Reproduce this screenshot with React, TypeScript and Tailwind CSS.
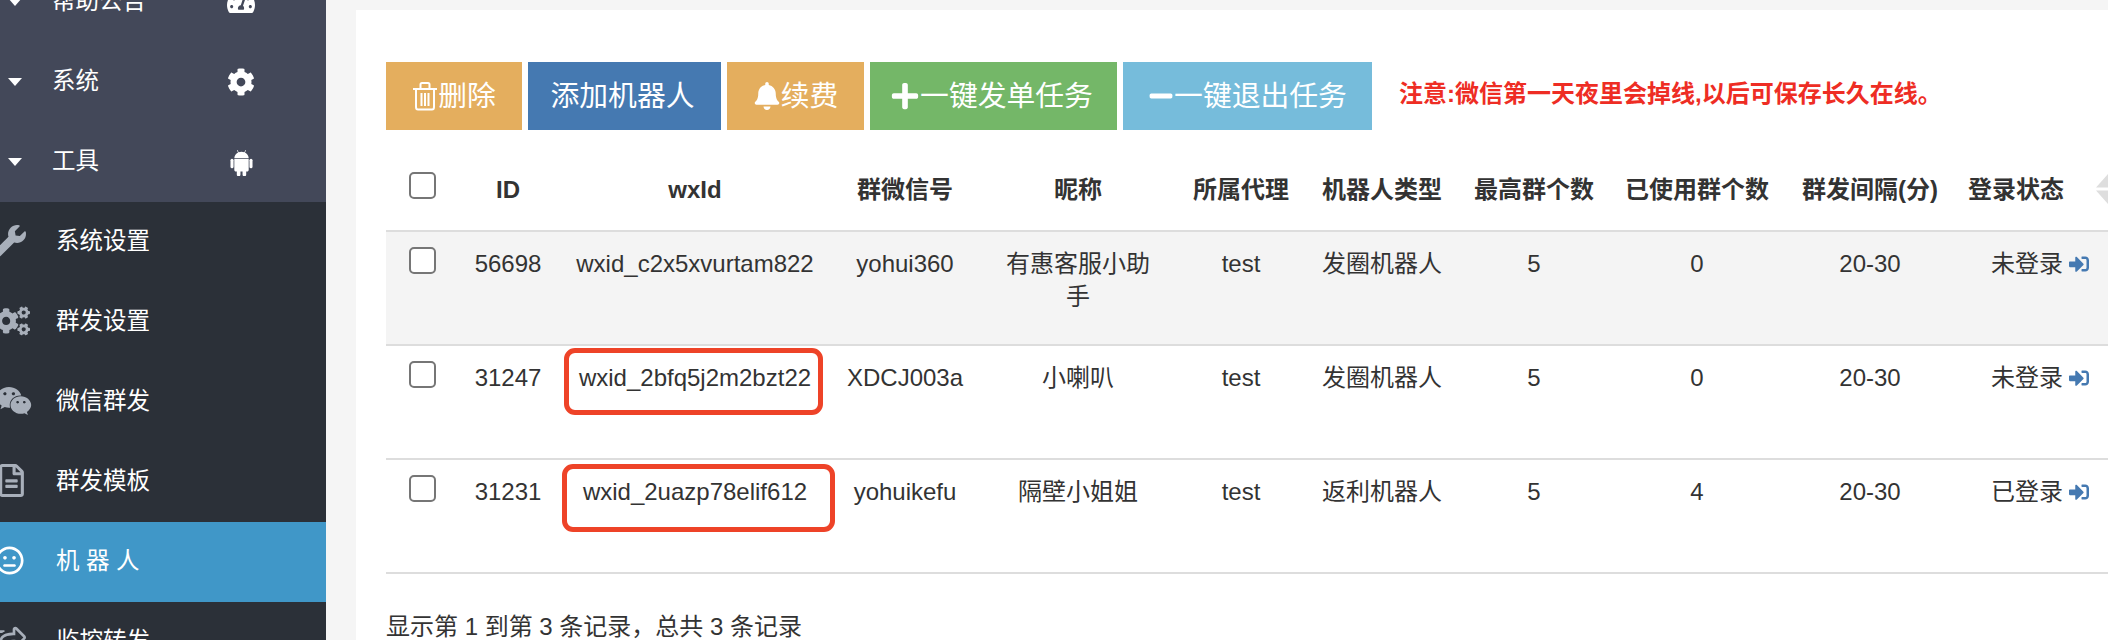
import React from "react";
import {
  FaTachometerAlt,
  FaCog,
  FaWrench,
  FaCogs,
  FaWeixin,
  FaRegFileAlt,
  FaRegMeh,
  FaRegShareSquare,
  FaBell,
  FaPlus,
  FaMinus,
  FaSignInAlt,
} from "react-icons/fa";

function AndroidIcon({ className }: { className?: string }) {
  return (
    <svg viewBox="0 0 24 28" width="23" height="27" fill="currentColor" className={className}>
      <path d="M4.5 9.2C4.7 6.6 6.2 4.6 8.4 3.5L7.2 1.2l.6-.3 1.2 2.3c1.9-.7 4.1-.7 6 0L16.200.9l.6.3-1.2 2.3c2.200 1.1 3.700 3.100 3.900 5.700z" />
      <path d="M4.500 10.200h15v11.600c0 .9-.7 1.600-1.600 1.600h-1v3.100a1.900 1.900 0 0 1-3.800 0v-3.100h-2.200v3.100a1.900 1.900 0 0 1-3.800 0v-3.100h-1c-.9 0-1.600-.7-1.600-1.600z" />
      <rect x="0.500" y="10" width="3.200" height="10" rx="1.600" />
      <rect x="20.300" y="10" width="3.200" height="10" rx="1.600" />
    </svg>
  );
}

function TrashIcon() {
  return (
    <svg viewBox="0 0 26 30" width="26" height="30" fill="none" stroke="currentColor" strokeWidth="2">
      <path d="M1 8h24M8.500 8V3.500c0-1 .6-1.500 1.500-1.500h6c.9 0 1.500.5 1.500 1.500V8" />
      <path d="M4 8v18c0 1.500.8 2.500 2 2.500h14c1.200 0 2-1 2-2.500V8" />
      <path d="M9.500 12v13M13 12v13M16.500 12v13" />
    </svg>
  );
}

const top = [
  { t: "帮助公告", icon: <FaTachometerAlt className="text-[28px]" /> },
  { t: "系统", icon: <FaCog className="text-[28px]" /> },
  { t: "工具", icon: <AndroidIcon /> },
];
const dark = [
  { t: "系统设置", icon: <FaWrench className="-ml-[6px] -mt-[3px] text-[32px] text-[#a8afba]" /> },
  { t: "群发设置", icon: <FaCogs className="-ml-[6px] -mt-[3px] text-[36px] text-[#a8afba]" /> },
  { t: "微信群发", icon: <FaWeixin className="-ml-[4px] -mt-[3px] text-[36px] text-[#a8afba]" /> },
  { t: "群发模板", icon: <FaRegFileAlt className="-ml-[5px] -mt-[3px] text-[33px] text-[#a8afba]" /> },
  { t: "机 器 人", icon: <FaRegMeh className="-ml-[5px] -mt-[3px] text-[29px] text-white" />, active: true },
  { t: "监控转发", icon: <FaRegShareSquare className="-ml-[6px] -mt-[3px] text-[32px] text-[#a8afba]" /> },
];
const heads = ["ID", "wxId", "群微信号", "昵称", "所属代理", "机器人类型", "最高群个数", "已使用群个数", "群发间隔(分)", "登录状态"];
const rows = [
  ["56698", "wxid_c2x5xvurtam822", "yohui360", "有惠客服小助手", "test", "发圈机器人", "5", "0", "20-30", "未登录"],
  ["31247", "wxid_2bfq5j2m2bzt22", "XDCJ003a", "小喇叭", "test", "发圈机器人", "5", "0", "20-30", "未登录"],
  ["31231", "wxid_2uazp78elif612", "yohuikefu", "隔壁小姐姐", "test", "返利机器人", "5", "4", "20-30", "已登录"],
];

function Check() {
  return <input type="checkbox" readOnly className="appearance-none block w-[27px] h-[27px] bg-white border-2 border-[#767676] rounded-[5px]" />;
}

export default function App() {
  return (
    <div className="relative flex w-[2108px] h-[640px] overflow-hidden bg-[#f5f5f5] text-[#333] [font-family:'Liberation_Sans','Noto_Sans_CJK_SC',sans-serif]">
      <aside className="w-[326px] shrink-0 h-[640px] overflow-hidden bg-[#2b3038] text-white text-[23.5px]">
        <div className="-mt-[38px] bg-[#434859]">
          {top.map(({ t, icon }) => (
            <div key={t} className="flex items-center h-[80px] pl-[8px]">
              <span className="w-0 h-0 border-x-[7px] border-x-transparent border-t-[8px] border-t-white" />
              <span className="ml-[30px] w-[175px]">{t}</span>
              <span className="flex justify-center w-[28px]">{icon}</span>
            </div>
          ))}
        </div>
        {dark.map(({ t, icon, active }) => (
          <div key={t} className={`flex items-center h-[80px] ${active ? "bg-[#4097c8]" : ""}`}>
            <span className="flex items-center w-[56px] shrink-0">{icon}</span>
            <span>{t}</span>
          </div>
        ))}
      </aside>
      <main className="flex-1 min-w-0 pl-[30px] pt-[10px]">
        <div className="bg-white h-full pl-[30px] pt-[52px] overflow-hidden">
          <div className="flex items-center gap-[6px] h-[68px] whitespace-nowrap text-white text-[28.8px]">
            <button className="flex items-center justify-center w-[136px] h-full bg-[#e4ae5e]"><TrashIcon /><span className="pt-[1px]">删除</span></button>
            <button className="flex items-center justify-center w-[193px] h-full bg-[#4579b1] pr-[4px]"><span className="pt-[1px]">添加机器人</span></button>
            <button className="flex items-center justify-center w-[137px] h-full bg-[#e4ae5e]"><FaBell className="text-[28px]" /><span className="pt-[1px]">续费</span></button>
            <button className="flex items-center justify-center w-[247px] h-full bg-[#74b768] pr-[4px]"><FaPlus className="text-[30px]" /><span className="pt-[1px]">一键发单任务</span></button>
            <button className="flex items-center justify-center w-[249px] h-full bg-[#76bcdb]"><FaMinus className="text-[26px]" /><span className="pt-[1px]">一键退出任务</span></button>
            <span className="ml-[21px] -mt-[4px] text-[#ee2d24] font-bold text-[24px]">注意:微信第一天夜里会掉线,以后可保存长久在线。</span>
          </div>
          <table className="mt-[14px] w-[1722px] table-fixed border-collapse text-center text-[24px] leading-[33px]">
            <colgroup>
              <col className="w-[72px]" />
              <col className="w-[100px]" />
              <col className="w-[274px]" />
              <col className="w-[146px]" />
              <col className="w-[200px]" />
              <col className="w-[126px]" />
              <col className="w-[156px]" />
              <col className="w-[148px]" />
              <col className="w-[178px]" />
              <col className="w-[168px]" />
              <col className="w-[124px]" />
              <col className="w-[30px]" />
            </colgroup>
            <thead>
              <tr className="h-[87px] border-b-2 border-[#ddd]">
                <th className="p-0 pb-[3px]"><span className="flex justify-center"><Check /></span></th>
                {heads.map((h) => (
                  <th key={h} className="p-0 pt-[4px] font-bold whitespace-nowrap">{h}</th>
                ))}
                <th className="p-0 pt-[3px]">
                  <svg width="30" height="32" viewBox="0 0 30 32" className="block">
                    <path d="M18 14.500 L30 1 L30 14.500 Z" fill="#dedede" />
                    <path d="M18 17.500 L30 31 L30 17.500 Z" fill="#dedede" />
                  </svg>
                </th>
              </tr>
            </thead>
            <tbody>
              {rows.map((r, i) => (
                <tr key={r[0]} className={`h-[114px] border-b-2 border-[#ddd] ${i === 0 ? "bg-[#f4f4f4]" : ""}`}>
                  <td className="p-0 pt-[15px] align-top"><span className="flex justify-center"><Check /></span></td>
                  {r.map((c, j) => (
                    <td key={j} className={`p-0 pt-[15px] align-top ${j === 3 ? "px-[24px]" : "whitespace-nowrap"} ${j === 9 ? "pl-[37px]" : ""}`}>
                      {c}
                      {j === 9 && <FaSignInAlt className="inline-block ml-[6px] text-[20px] text-[#4579b1] align-[-2px]" />}
                    </td>
                  ))}
                  <td className="p-0" />
                </tr>
              ))}
            </tbody>
          </table>
          <p className="mt-[37px] text-[24px] leading-[32px]">显示第 1 到第 3 条记录，总共 3 条记录</p>
        </div>
      </main>
      <div className="absolute left-[564px] top-[348px] w-[259px] h-[67px] border-[5px] border-[#ee4328] rounded-[11px]" />
      <div className="absolute left-[562px] top-[464px] w-[273px] h-[68px] border-[5px] border-[#ee4328] rounded-[11px]" />
    </div>
  );
}
